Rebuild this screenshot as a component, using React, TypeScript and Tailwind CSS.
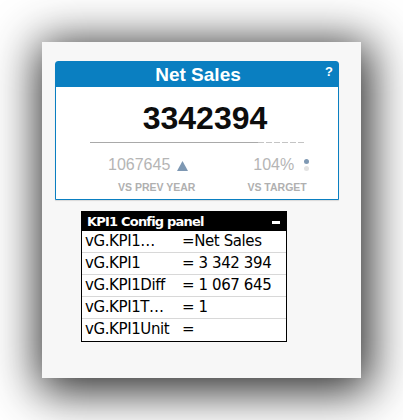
import React from "react";

const rows: [string, string][] = [
  ["vG.KPI1…", "=Net Sales"],
  ["vG.KPI1", "= 3 342 394"],
  ["vG.KPI1Diff", "= 1 067 645"],
  ["vG.KPI1T…", "= 1"],
  ["vG.KPI1Unit", "="],
];

export default function App() {
  return (
    <div className="w-[403px] h-[420px] bg-white pt-[42px] pl-[42px] overflow-hidden">
      <div className="w-[319px] h-[336px] bg-[#f7f7f7] shadow-[3px_7px_44px_6px_rgba(0,0,0,0.85)] flex flex-col pt-[19px]">
        {/* KPI card */}
        <div className="ml-[13px] w-[284px] border border-[#0a7fc1] rounded-t-[3px] bg-white shadow-[0_1px_1px_rgba(0,0,0,0.12)] font-['Liberation_Sans',Arial,sans-serif]">
          <div className="h-[25px] bg-[#0a7fc1] flex items-center justify-center relative">
            <span className="text-white font-bold text-[19px] leading-none pl-[2px]">Net Sales</span>
            <span className="absolute right-[5px] top-[3px] text-white font-bold text-[13px] leading-none">?</span>
          </div>
          <div className="flex flex-col pb-[6px]">
            <div className="mt-[13px] pl-[16px] text-center text-[32px] leading-[36px] font-bold text-[#0d0d0d]">3342394</div>
            <div className="mt-[6px] ml-[34px] flex h-[1px]">
              <div className="w-[168px] h-[1px] bg-[#a9a9a9]" />
              <div className="w-[48px] h-[1px] bg-[linear-gradient(to_right,#c4c4c4_6px,transparent_6px)] bg-[length:8px_1px]" />
            </div>
            <div className="mt-[13px] flex items-end h-[18px] text-[16px] leading-[18px] text-[#b5b5b5]">
              <span className="ml-[52px]">1067645</span>
              <svg className="ml-[7px] mb-[3px]" width="11" height="10" viewBox="0 0 11 10">
                <polygon points="5.5,0 11,10 0,10" fill="#7e98b3" />
              </svg>
              <span className="ml-[65px]">104%</span>
              <div className="ml-[10px] mb-[3px] flex flex-col gap-[2px]">
                <div className="w-[5px] h-[5px] rounded-full bg-[#7e98b3]" />
                <div className="w-[5px] h-[5px] rounded-full bg-[#e2e2e2]" />
              </div>
            </div>
            <div className="mt-[7px] flex text-[10.5px] leading-[12px] font-bold text-[#b0b0b0]">
              <span className="ml-[62px]">VS PREV YEAR</span>
              <span className="ml-[52px]">VS TARGET</span>
            </div>
          </div>
        </div>

        {/* Config panel */}
        <div className="ml-[39px] mt-[11px] w-[206px] border border-black border-t-0 bg-white font-['DejaVu_Sans',Verdana,sans-serif]">
          <div className="h-[20px] bg-black flex items-center justify-between pl-[5px] pr-[6px]">
            <span className="text-white font-bold text-[13px] tracking-[-0.8px] leading-none">KPI1 Config panel</span>
            <div className="w-[8px] h-[3px] bg-white mt-[3px]" />
          </div>
          {rows.map(([k, v], i) => (
            <div
              key={k}
              className={
                i < rows.length - 1
                  ? "flex h-[22px] border-b border-[#d8d8d8] text-[15px] leading-[21px] text-black tracking-[-0.4px]"
                  : "flex h-[22px] text-[15px] leading-[21px] text-black tracking-[-0.4px]"
              }
            >
              <span className="w-[100px] pl-[3px] whitespace-nowrap overflow-hidden">{k}</span>
              <span className="whitespace-pre">{v}</span>
            </div>
          ))}
        </div>
      </div>
    </div>
  );
}
